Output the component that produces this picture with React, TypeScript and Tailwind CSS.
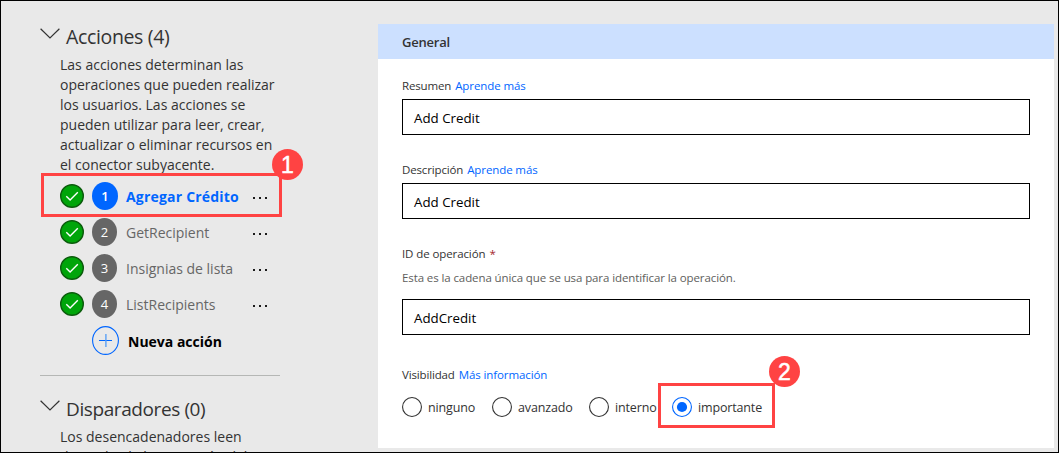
import type { ReactNode } from 'react';

const actions = [
  { n: 1, name: 'Agregar Crédito', active: true },
  { n: 2, name: 'GetRecipient', active: false },
  { n: 3, name: 'Insignias de lista', active: false },
  { n: 4, name: 'ListRecipients', active: false },
];

function Chevron() {
  return (
    <svg width="20" height="12" viewBox="0 0 20 12" className="mt-[5px] shrink-0" fill="none" stroke="#333" strokeWidth="1.2">
      <path d="M0.6 0.8 L10 10 L19.4 0.8" />
    </svg>
  );
}

function SectionTitle({ children }: { children: ReactNode }) {
  return (
    <div className="flex h-7 items-start gap-[6px]">
      <Chevron />
      {children}
    </div>
  );
}

function Check() {
  return (
    <svg width="24" height="24" viewBox="0 0 24 24" className="shrink-0" fill="none">
      <circle cx="12" cy="12" r="11.3" fill="#00a50a" stroke="#0b5c0c" strokeWidth="1.4" />
      <path d="M6.3 12.2 L10.1 16 L17.8 8.2" stroke="#fff" strokeWidth="1.4" />
    </svg>
  );
}

function Dots() {
  return (
    <svg width="20" height="4" viewBox="0 0 20 4" className="mt-1 shrink-0" fill="#1b1b1b">
      <rect x="1" y="1" width="2" height="2" />
      <rect x="7" y="1" width="2" height="2" />
      <rect x="13" y="1" width="2" height="2" />
    </svg>
  );
}

function Badge({ n, className }: { n: number; className: string }) {
  return (
    <div className={`absolute flex size-[31px] items-center justify-center rounded-full bg-[#ff4343] pt-px font-['Liberation_Sans',sans-serif] text-[23px] leading-none text-white [-webkit-text-stroke:0.5px_white] ${className}`}>
      {n}
    </div>
  );
}

function Label({ text, link }: { text: string; link?: string }) {
  return (
    <div className="flex h-5 gap-[4px] text-[11.5px] leading-5">
      <span className="tracking-[-0.15px]">{text}</span>
      {link && <a className="tracking-[-0.1px] text-[#0066ff]">{link}</a>}
    </div>
  );
}

function Field({ value }: { value: string }) {
  return (
    <div className="flex h-9 w-[628px] items-center border border-black bg-white pt-[3px] pl-[11px] text-[13.3px] text-black">{value}</div>
  );
}

function Radio({ label, checked, className }: { label: string; checked?: boolean; className?: string }) {
  return (
    <div className={`flex h-5 items-center gap-[6px] text-[12.5px] leading-5 tracking-[-0.15px] ${className ?? ''}`}>
      <svg width="20" height="20" viewBox="0 0 20 20" className="shrink-0" fill="none">
        <circle cx="10" cy="10" r="9.45" stroke={checked ? '#0066ff' : '#333'} strokeWidth="1.1" />
        {checked && <circle cx="10" cy="10" r="5.1" fill="#0066ff" />}
      </svg>
      <span className="mt-[2px]">{label}</span>
    </div>
  );
}

export default function App() {
  return (
    <div className="relative flex h-[453px] w-[1059px] overflow-hidden border border-black bg-[#e9e9e9] font-['Open_Sans','Noto_Sans',sans-serif] text-[#333]">
      <aside className="w-[377px] shrink-0 pt-[22px] pl-[39px]">
        <SectionTitle>
          <h2 className="text-[19.5px] leading-7 tracking-[-0.35px]">Acciones (4)</h2>
        </SectionTitle>
        <p className="mt-1 pl-5 text-[14px] leading-5 whitespace-nowrap">
          Las acciones determinan las<br />
          operaciones que pueden realizar<br />
          los usuarios. Las acciones se<br />
          pueden utilizar para leer, crear,<br />
          actualizar o eliminar recursos en<br />
          el conector subyacente.
        </p>
        <ul className="mt-[3px] w-[232px] pl-5 text-[14px] leading-5">
          {actions.map((a) => (
            <li key={a.n} className="flex h-9 items-center">
              <Check />
              <span className={`mr-2 ml-2 flex h-7 shrink-0 items-center justify-center rounded-[50%] pb-px text-[13px] text-white ${a.active ? 'w-[26px] bg-[#0066ff] font-semibold' : 'w-[25px] bg-[#666]'}`}>
                {a.n}
              </span>
              <span className={`mt-[2px] flex-1 whitespace-nowrap ${a.active ? 'font-bold tracking-[0.2px] text-[#0066ff]' : 'pl-px text-[#666]'}`}>{a.name}</span>
              <Dots />
            </li>
          ))}
        </ul>
        <div className="mt-1 flex h-[29px] items-center gap-[9px] pl-[52px]">
          <svg width="27" height="29" viewBox="0 0 27 29" fill="none" stroke="#0066ff">
            <ellipse cx="13.5" cy="14.5" rx="12.9" ry="13.9" strokeWidth="1.1" />
            <path d="M7 14.5 H20" />
            <path d="M13.9 8 V21" stroke="#5aa0f5" strokeWidth="1.4" />
          </svg>
          <span className="mt-[2px] text-[14px] leading-5 font-bold text-black">Nueva acción</span>
        </div>
        <div className="mt-5 h-px w-[240px] bg-[#b5b7b5]" />
        <div className="mt-[19px]">
          <SectionTitle>
            <h2 className="text-[19px] leading-7 tracking-[-0.4px]">Disparadores (0)</h2>
          </SectionTitle>
        </div>
        <p className="mt-1 pl-5 text-[14px] leading-5 whitespace-nowrap">
          Los desencadenadores leen<br />
          datos desde la operación del
        </p>
      </aside>
      <main className="mt-[23px] h-[424px] w-[676px] bg-white">
        <h3 className="flex h-[35px] items-center bg-[#cce0ff] pt-[3px] pl-6 text-[13px] font-semibold tracking-[-0.2px]">General</h3>
        <div className="pt-[17px] pl-6">
          <Label text="Resumen" link="Aprende más" />
          <div className="mt-[3px]"><Field value="Add Credit" /></div>
          <div className="mt-[25px]"><Label text="Descripción" link="Aprende más" /></div>
          <div className="mt-[3px]"><Field value="Add Credit" /></div>
          <div className="mt-[25px] flex h-5 gap-[4px] text-[11.5px] leading-5 tracking-[-0.1px]">
            <span>ID de operación</span>
            <span className="text-[#a4262c]">*</span>
          </div>
          <p className="mt-1 text-[11.5px] leading-5 tracking-[-0.1px] text-[#605e5c]">Esta es la cadena única que se usa para identificar la operación.</p>
          <div className="mt-[11px]"><Field value="AddCredit" /></div>
          <div className="mt-[30px]"><Label text="Visibilidad" link="Más información" /></div>
          <div className="mt-3 flex">
            <Radio label="ninguno" className="w-[90px]" />
            <Radio label="avanzado" className="w-[97px]" />
            <Radio label="interno" className="w-[83px]" />
            <Radio label="importante" checked />
          </div>
        </div>
      </main>
      <div className="absolute top-[172px] left-[40px] h-[44px] w-[241px] border-3 border-[#ff4343]" />
      <Badge n={1} className="top-[148px] left-[271px]" />
      <div className="absolute top-[382px] left-[657px] h-[45px] w-[117px] border-3 border-[#ff4343]" />
      <Badge n={2} className="top-[355px] left-[768px]" />
    </div>
  );
}
